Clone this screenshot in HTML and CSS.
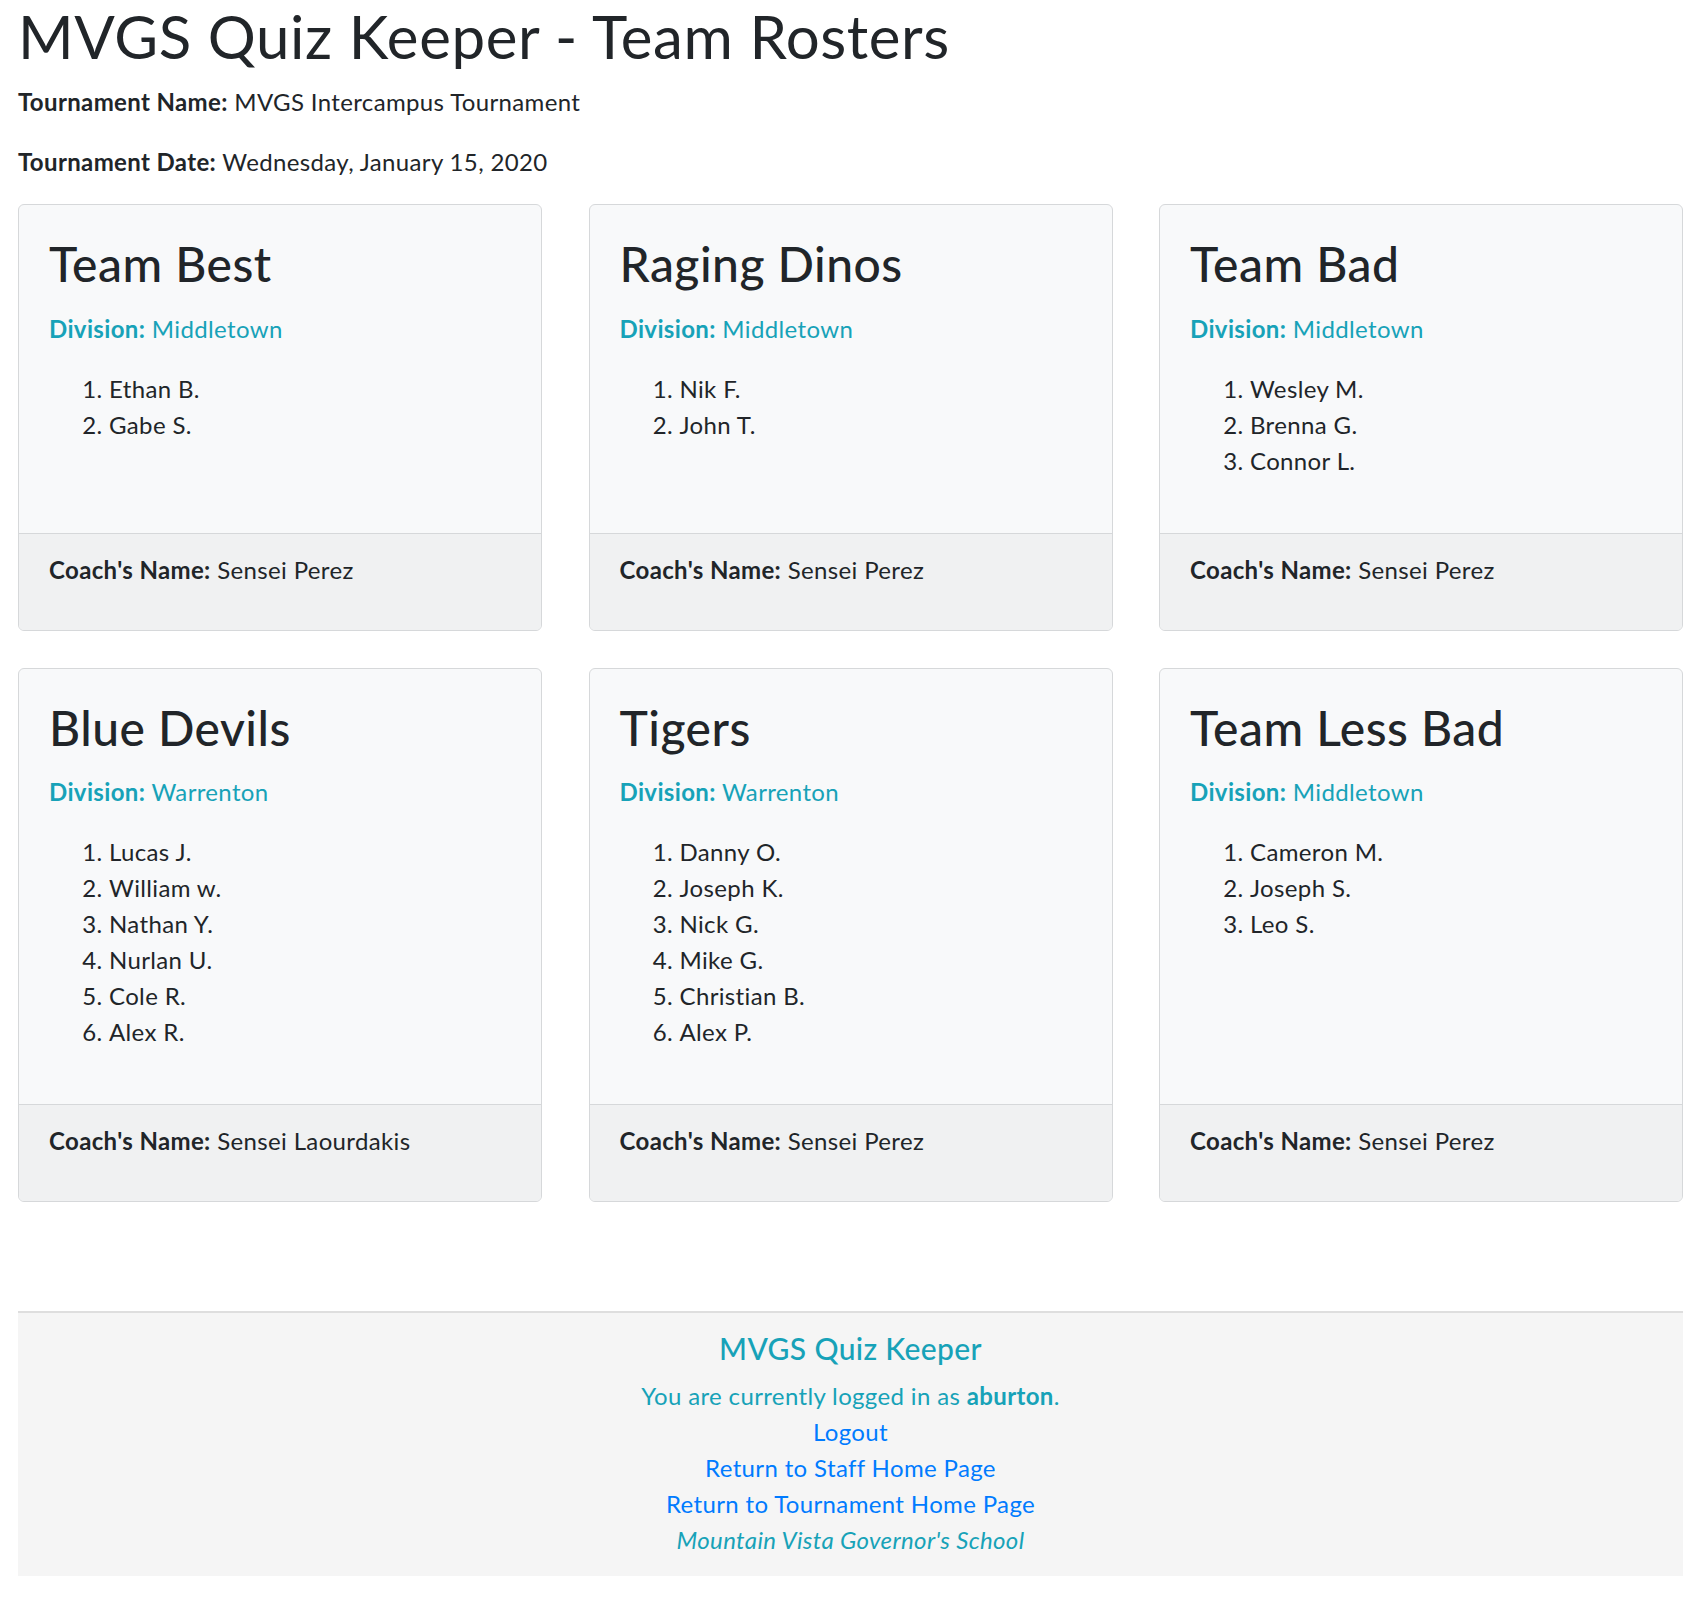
FILE: index.html
```html
<!DOCTYPE html>
<html lang="en">
<head>
<meta charset="utf-8">
<title>MVGS Quiz Keeper - Team Rosters</title>
<link rel="stylesheet" href="styles.css">
</head>
<body>
<div class="page">
  <h1 class="page-title">MVGS Quiz Keeper - Team Rosters</h1>
  <p class="meta"><b>Tournament Name:</b> MVGS Intercampus Tournament</p>
  <p class="meta"><b>Tournament Date:</b> Wednesday, January 15, 2020</p>

  <div class="teams">
    <div class="card">
      <div class="card-body">
        <h2 class="card-title">Team Best</h2>
        <p class="division"><b>Division:</b> Middletown</p>
        <ol class="roster"><li>Ethan B.</li><li>Gabe S.</li></ol>
      </div>
      <div class="card-footer"><p><b>Coach's Name:</b> Sensei Perez</p></div>
    </div>
    <div class="card">
      <div class="card-body">
        <h2 class="card-title">Raging Dinos</h2>
        <p class="division"><b>Division:</b> Middletown</p>
        <ol class="roster"><li>Nik F.</li><li>John T.</li></ol>
      </div>
      <div class="card-footer"><p><b>Coach's Name:</b> Sensei Perez</p></div>
    </div>
    <div class="card">
      <div class="card-body">
        <h2 class="card-title">Team Bad</h2>
        <p class="division"><b>Division:</b> Middletown</p>
        <ol class="roster"><li>Wesley M.</li><li>Brenna G.</li><li>Connor L.</li></ol>
      </div>
      <div class="card-footer"><p><b>Coach's Name:</b> Sensei Perez</p></div>
    </div>
    <div class="card">
      <div class="card-body">
        <h2 class="card-title">Blue Devils</h2>
        <p class="division"><b>Division:</b> Warrenton</p>
        <ol class="roster"><li>Lucas J.</li><li>William w.</li><li>Nathan Y.</li><li>Nurlan U.</li><li>Cole R.</li><li>Alex R.</li></ol>
      </div>
      <div class="card-footer"><p><b>Coach's Name:</b> Sensei Laourdakis</p></div>
    </div>
    <div class="card">
      <div class="card-body">
        <h2 class="card-title">Tigers</h2>
        <p class="division"><b>Division:</b> Warrenton</p>
        <ol class="roster"><li>Danny O.</li><li>Joseph K.</li><li>Nick G.</li><li>Mike G.</li><li>Christian B.</li><li>Alex P.</li></ol>
      </div>
      <div class="card-footer"><p><b>Coach's Name:</b> Sensei Perez</p></div>
    </div>
    <div class="card">
      <div class="card-body">
        <h2 class="card-title">Team Less Bad</h2>
        <p class="division"><b>Division:</b> Middletown</p>
        <ol class="roster"><li>Cameron M.</li><li>Joseph S.</li><li>Leo S.</li></ol>
      </div>
      <div class="card-footer"><p><b>Coach's Name:</b> Sensei Perez</p></div>
    </div>
  </div>

  <footer class="site-footer">
    <h5 class="footer-title">MVGS Quiz Keeper</h5>
    <p class="footer-line info">You are currently logged in as <b>aburton</b>.</p>
    <p class="footer-line"><a href="#">Logout</a></p>
    <p class="footer-line"><a href="#">Return to Staff Home Page</a></p>
    <p class="footer-line"><a href="#">Return to Tournament Home Page</a></p>
    <p class="footer-line info"><i>Mountain Vista Governor's School</i></p>
  </footer>
</div>
</body>
</html>
```

FILE: styles.css
```css
* { box-sizing: border-box; }

html, body {
  margin: 0;
  padding: 0;
  background: #fff;
}

body {
  font-family: Lato, "Open Sans", "Noto Sans", sans-serif;
  font-size: 24px;
  line-height: 36px;
  color: #212529;
  letter-spacing: 0.015em;
}

.page {
  padding: 0 21px 26px 18px;
}

.page-title {
  margin: 0 0 12px;
  font-size: 60px;
  line-height: 72px;
  font-weight: 400;
  letter-spacing: 0.01em;
}

.meta {
  margin: 0 0 24px;
}

b { font-weight: 700; }

.teams {
  display: grid;
  grid-template-columns: repeat(3, 1fr);
  column-gap: 46.5px;
  row-gap: 37px;
}

.card {
  display: flex;
  flex-direction: column;
  background: #f8f9fa;
  border: 1px solid #d6d8da;
  border-radius: 6px;
  overflow: hidden;
}

.card-body {
  flex: 1;
  padding: 30px;
}

.card-title {
  margin: 0 0 18px;
  font-size: 48px;
  line-height: 57.6px;
  font-weight: 500;
  letter-spacing: 0.01em;
}

.division {
  margin: 0 0 24px;
  color: #17a2b8;
}

.roster {
  margin: 0 0 24px;
  padding-left: 60px;
}

.card-footer {
  background: #f0f1f2;
  border-top: 1px solid #d6d8da;
  padding: 18px 30px;
}

.card-footer p {
  margin: 0 0 24px;
}

.site-footer {
  margin-top: 109px;
  background: #f5f5f5;
  border-top: 2px solid #dedede;
  padding: 17px 0 18px;
  text-align: center;
}

.footer-title {
  margin: 0 0 12px;
  font-size: 30px;
  line-height: 36px;
  font-weight: 500;
  color: #17a2b8;
}

.footer-line {
  margin: 0;
}

.info { color: #17a2b8; }

.site-footer a {
  color: #007bff;
  text-decoration: none;
}
```
